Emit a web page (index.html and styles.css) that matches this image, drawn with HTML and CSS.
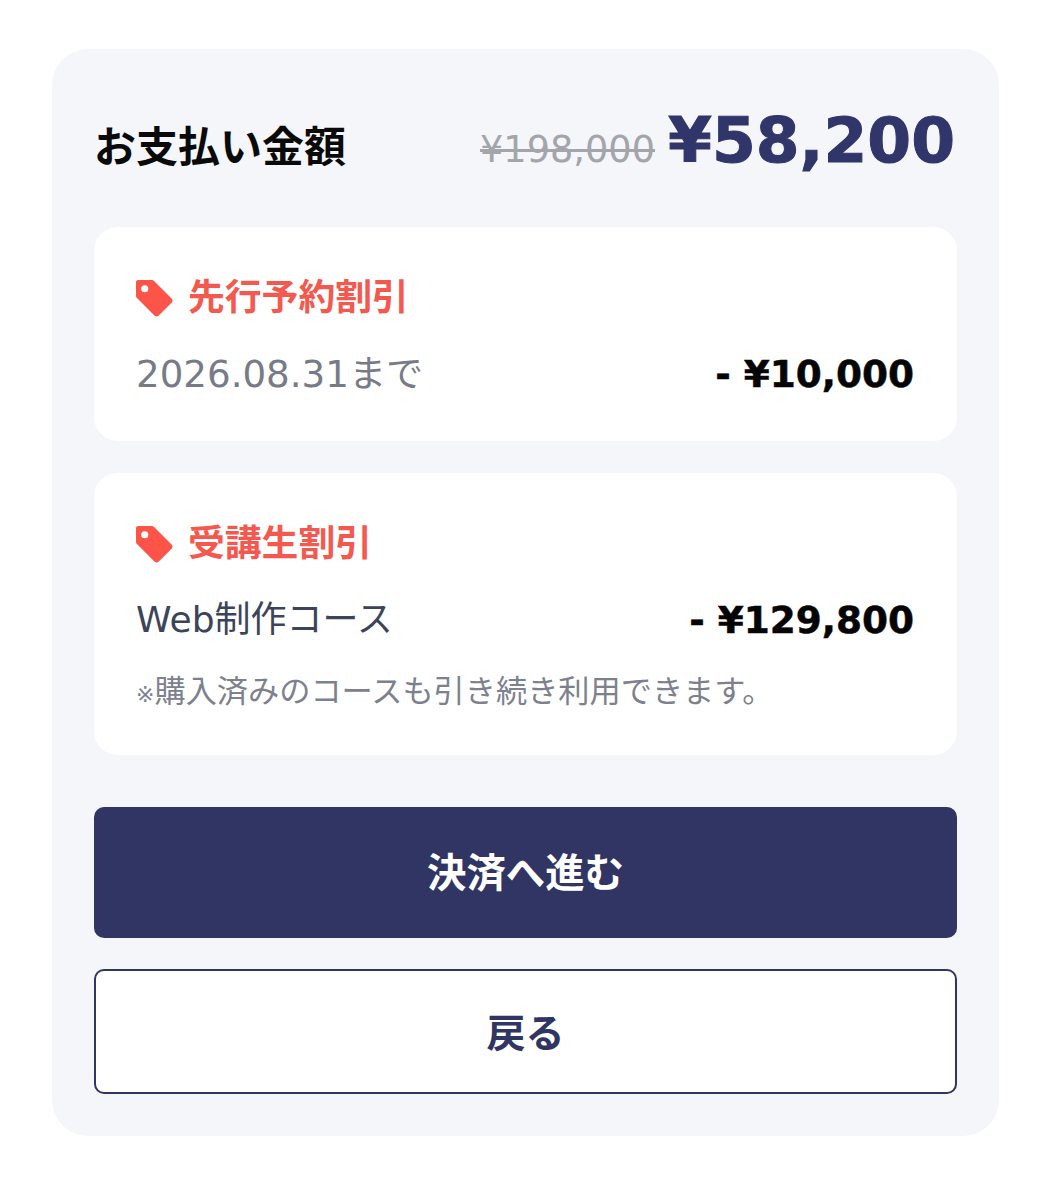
FILE: index.html
```html
<!DOCTYPE html>
<html lang="ja">
<head>
<meta charset="utf-8">
<title>お支払い金額</title>
<link rel="stylesheet" href="styles.css">
</head>
<body>
<main class="panel">
  <header class="total">
    <h1 class="total-label">お支払い金額</h1>
    <div class="total-prices">
      <s class="old-price">¥198,000</s>
      <strong class="new-price">¥58,200</strong>
    </div>
  </header>
  <section class="card card-first">
    <h2 class="card-title">
      <svg class="tag" viewBox="0 0 38 38" aria-hidden="true"><path fill-rule="evenodd" d="M3 1h13.5a3 3 0 0 1 2.1.9l17 17a3 3 0 0 1 0 4.2L23.1 35.6a3 3 0 0 1-4.2 0l-17-17A3 3 0 0 1 1 16.5V3a2 2 0 0 1 2-2zm6.5 5a3.5 3.5 0 1 0 0 7 3.5 3.5 0 0 0 0-7z"/></svg>
      <span>先行予約割引</span>
    </h2>
    <div class="row">
      <span class="row-name muted">2026.08.31まで</span>
      <span class="row-amount">- ¥10,000</span>
    </div>
  </section>
  <section class="card card-second">
    <h2 class="card-title">
      <svg class="tag" viewBox="0 0 38 38" aria-hidden="true"><path fill-rule="evenodd" d="M3 1h13.5a3 3 0 0 1 2.1.9l17 17a3 3 0 0 1 0 4.2L23.1 35.6a3 3 0 0 1-4.2 0l-17-17A3 3 0 0 1 1 16.5V3a2 2 0 0 1 2-2zm6.5 5a3.5 3.5 0 1 0 0 7 3.5 3.5 0 0 0 0-7z"/></svg>
      <span>受講生割引</span>
    </h2>
    <div class="row">
      <span class="row-name">Web制作コース</span>
      <span class="row-amount">- ¥129,800</span>
    </div>
    <p class="note"><span class="note-mark">※</span>購入済みのコースも引き続き利用できます。</p>
  </section>
  <a class="btn btn-primary">決済へ進む</a>
  <a class="btn btn-secondary">戻る</a>
</main>
</body>
</html>
```
FILE: styles.css
```css
* { box-sizing: border-box; }
html, body { margin: 0; padding: 0; background: #fff; }
body {
  padding: 49px 52px 64px 52px;
  font-family: "DejaVu Sans", "Noto Sans CJK JP", sans-serif;
}
.panel {
  display: flex;
  flex-direction: column;
  height: 1087px;
  padding: 0 42px;
  background: #f5f6fa;
  border-radius: 36px;
}
.total {
  display: flex;
  align-items: center;
  justify-content: space-between;
  height: 178px;
  padding-top: 8px;
}
.total-label { margin: 2px 0 0; font-size: 42px; font-weight: 700; color: #0a0a0a; }
.total-prices { display: flex; align-items: baseline; gap: 13px; margin-bottom: 4px; margin-right: 2px; }
.old-price { font-size: 36.7px; color: #a3a5aa; }
.new-price {
  font-size: 63px;
  font-weight: 700;
  color: #30356a;
  line-height: 1;
  -webkit-text-stroke: 1px #30356a;
}
.card { background: #fff; border-radius: 24px; padding: 0 42px; }
.card-first { height: 214px; margin-bottom: 32px; }
.card-second { height: 282px; margin-bottom: 52px; }
.card-title {
  display: flex;
  align-items: center;
  gap: 14px;
  margin: 0;
  padding-top: 46px;
  font-size: 36.8px;
  line-height: 50px;
  font-weight: 700;
  color: #f4594f;
}
.tag { width: 39px; height: 39px; margin-left: -1px; fill: #fc5449; flex: none; }
.row {
  display: flex;
  align-items: center;
  justify-content: space-between;
  margin-top: 26px;
  font-size: 36px;
  line-height: 50px;
}
.row-name { color: #3c4459; }
.muted { color: #777b88; font-size: 37.2px; }
.row-amount {
  margin-right: 1px;
  font-size: 37.4px;
  font-weight: 700;
  color: #050505;
  -webkit-text-stroke: 0.5px #050505;
}
.note { margin: 24px 0 0; font-size: 31.2px; line-height: 44px; color: #7d818d; }
.note-mark { font-size: 22px; }
.btn {
  display: flex;
  align-items: center;
  justify-content: center;
  border-radius: 10px;
  font-weight: 700;
}
.btn-primary { height: 131px; margin-bottom: 31px; padding-bottom: 6px; font-size: 39.4px; background: #303564; color: #fff; }
.btn-secondary { height: 125px; padding-bottom: 4px; font-size: 39px; background: #fff; border: 2px solid #303564; color: #303564; }
```
